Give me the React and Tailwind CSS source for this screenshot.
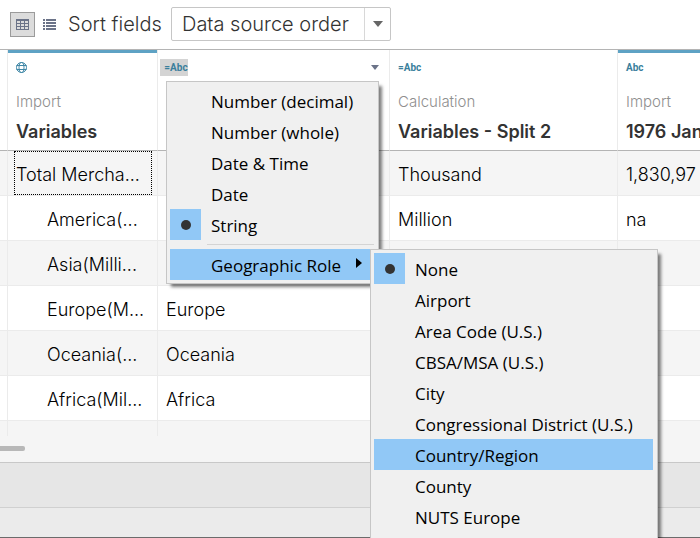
import React from "react";

const rows = [
  { name: "Total Mercha...", region: "", unit: "Thousand", value: "1,830,97", total: true },
  { name: "America(...", region: "", unit: "Million", value: "na" },
  { name: "Asia(Milli...", region: "", unit: "", value: "" },
  { name: "Europe(M...", region: "Europe", unit: "", value: "" },
  { name: "Oceania(...", region: "Oceania", unit: "", value: "" },
  { name: "Africa(Mil...", region: "Africa", unit: "", value: "" },
];

const typeItems = [
  { label: "Number (decimal)" },
  { label: "Number (whole)" },
  { label: "Date & Time" },
  { label: "Date" },
  { label: "String", checked: true },
];

const roleItems = [
  { label: "None", checked: true },
  { label: "Airport" },
  { label: "Area Code (U.S.)" },
  { label: "CBSA/MSA (U.S.)" },
  { label: "City" },
  { label: "Congressional District (U.S.)" },
  { label: "Country/Region", active: true },
  { label: "County" },
  { label: "NUTS Europe" },
];

function GridIcon() {
  return (
    <svg width="13" height="11" viewBox="0 0 13 11" fill="#6b7388" shapeRendering="crispEdges" aria-hidden="true">
      <path fillRule="evenodd" d="M0 0h13v11H0zM1 2v2h3V2zM5 2v2h3V2zM9 2v2h3V2zM1 5v2h3V5zM5 5v2h3V5zM9 5v2h3V5zM1 8v2h3V8zM5 8v2h3V8zM9 8v2h3V8z" />
    </svg>
  );
}

function ListIcon() {
  return (
    <svg width="13" height="11" viewBox="0 0 13 11" fill="#6b7388" shapeRendering="crispEdges" aria-hidden="true">
      <path d="M0 0h2v2H0zM3 0h10v2H3zM0 3h2v2H0zM3 3h10v2H3zM0 6h2v2H0zM3 6h10v2H3zM0 9h2v2H0zM3 9h10v2H3z" />
    </svg>
  );
}

function GlobeIcon() {
  return (
    <svg width="11" height="11" viewBox="0 0 11 11" fill="none" stroke="#3f87a6" aria-hidden="true">
      <circle cx="5.5" cy="5.5" r="5" />
      <ellipse cx="5.5" cy="5.5" rx="2.5" ry="5" />
      <path d="M0.5 3.5h10M0.5 7.5h10" />
    </svg>
  );
}

function MenuItem({ label, checked, active, children }) {
  return (
    <li role="none" className="relative">
      <button
        type="button"
        role="menuitem"
        className={`flex h-[31px] w-full items-center text-left whitespace-nowrap ${active ? "bg-[#91c8f6]" : ""}`}
      >
        <span className={`mr-[10px] flex size-[31px] shrink-0 items-center justify-center ${checked ? "bg-[#91c8f6]" : ""}`}>
          {checked && <span className="size-[10px] rounded-full bg-[#333]" />}
        </span>
        <span className="pt-0.5">{label}</span>
        {children && (
          <svg width="6" height="10" viewBox="0 0 6 10" className="mr-[12px] mb-1 ml-auto" aria-hidden="true">
            <path d="M0 0l6 5-6 5z" fill="#000" />
          </svg>
        )}
      </button>
      {children}
    </li>
  );
}

const menuBox =
  "absolute border border-[#c6c6c6] bg-[#f0f0f0] py-[3px] pl-[3px] pr-1 font-['Open_Sans','Noto_Sans',sans-serif] text-[17px] font-normal text-black shadow-[4px_4px_3px_-1px_rgba(0,0,0,0.5)]";

function RoleMenu() {
  return (
    <ul role="menu" aria-label="Geographic Role" className={`${menuBox} top-0 left-[200px] w-[288px] pb-8`}>
      {roleItems.map((item) => (
        <MenuItem key={item.label} {...item} />
      ))}
    </ul>
  );
}

function TypeMenu() {
  return (
    <ul role="menu" aria-label="Data type" className={`${menuBox} top-[31px] left-2 z-10 w-[213px]`}>
      {typeItems.map((item) => (
        <MenuItem key={item.label} {...item} />
      ))}
      <li role="separator" className="ml-[37px] h-[9px] py-1">
        <div className="h-px bg-[#d4d4d4]" />
      </li>
      <MenuItem label="Geographic Role" active>
        <RoleMenu />
      </MenuItem>
    </ul>
  );
}

function Header({ imported, icon, source, title, children }) {
  return (
    <th scope="col" className="relative h-[101px] border-r border-b border-r-[#ebebeb] border-b-[#b4b4b4] p-0 text-left align-top font-normal last:border-r-0">
      <div className={`h-[3px] ${imported ? "bg-[#5ea2c4]" : ""}`} />
      <div className="flex h-[29px] items-center pl-2 font-['Roboto',sans-serif] text-[10px] font-bold text-[#3a7f9c]">{icon}</div>
      <div className="mt-2 pl-2 text-[15px] leading-6 font-light text-[#8f8f8f]">{source}</div>
      <div className="mt-1 pl-2 text-[18px] leading-7 font-semibold whitespace-nowrap text-[#333]">{title}</div>
      {children}
    </th>
  );
}

const cell = "overflow-hidden border-r border-b border-[#ebebeb] p-0 pt-0.5 pl-2 whitespace-nowrap last:border-r-0";

export default function App() {
  return (
    <div className="flex h-screen flex-col overflow-hidden bg-white font-['Inter',sans-serif] text-[#333]">
      <header className="flex h-[50px] shrink-0 items-center border-b border-[#b4b4b4] pb-px pl-[10px]">
        <button type="button" aria-label="Grid view" className="flex size-[25px] items-center justify-center border border-[#9b9b9b] bg-[#dcdcdc]">
          <GridIcon />
        </button>
        <button type="button" aria-label="List view" className="ml-2 flex">
          <ListIcon />
        </button>
        <label htmlFor="sort" className="ml-3 w-[103px] text-xl font-light whitespace-nowrap">
          Sort fields
        </label>
        <div className="relative h-[34px] w-[220px]">
          <select id="sort" className="h-full w-full appearance-none rounded-xs border border-[#c6c6c6] bg-white pl-[10px] text-xl font-light">
            <option>Data source order</option>
          </select>
          <div className="pointer-events-none absolute inset-y-px right-px flex w-[26px] items-center justify-center border-l border-[#d8d8d8]">
            <svg width="10" height="6" viewBox="0 0 10 6" aria-hidden="true">
              <path d="M0 0h10L5 6z" fill="#666" />
            </svg>
          </div>
        </div>
      </header>

      <main className="shrink-0">
        <table className="w-full table-fixed border-separate border-spacing-0 text-[18px]">
          <colgroup>
            <col className="w-2" />
            <col className="w-[150px]" />
            <col className="w-[232px]" />
            <col className="w-[228px]" />
            <col />
          </colgroup>
          <thead>
            <tr>
              <td className="border-r border-b border-r-[#ebebeb] border-b-[#b4b4b4] p-0" />
              <Header imported icon={<GlobeIcon />} source="Import" title="Variables" />
              <Header
                icon={
                  <div className="-ml-[6px] flex w-full items-center justify-between">
                    <button type="button" className="h-[17px] w-7 bg-[#d4d4d4] pl-1">=Abc</button>
                    <svg width="8" height="5" viewBox="0 0 8 5" className="mr-1" aria-hidden="true">
                      <path d="M0 0h8L4 5z" fill="#6b7388" />
                    </svg>
                  </div>
                }
                source=""
                title=""
              >
                <TypeMenu />
              </Header>
              <Header icon="=Abc" source="Calculation" title="Variables - Split 2" />
              <Header imported icon="Abc" source="Import" title="1976 Jan" />
            </tr>
          </thead>
          <tbody className="font-light text-black">
            {rows.map((row) => (
              <tr key={row.name} className="h-[45px] odd:bg-[#f5f5f5]">
                <td className="border-r border-b border-[#ebebeb] p-0" />
                {row.total ? (
                  <td className="border-r border-b border-[#ebebeb] p-0 whitespace-nowrap">
                    <div className="mr-[5px] ml-[6px] flex h-[44px] items-center border border-dotted border-black pt-0.5 pl-px">{row.name}</div>
                  </td>
                ) : (
                  <td className="border-r border-b border-[#ebebeb] p-0 pt-0.5 pl-[39px] whitespace-nowrap">{row.name}</td>
                )}
                <td className={cell}>{row.region}</td>
                <td className={cell}>{row.unit}</td>
                <td className={cell}>{row.value}</td>
              </tr>
            ))}
            <tr className="h-[15px] bg-[#f5f5f5]">
              <td className="border-r border-[#ebebeb] p-0" />
              <td className="border-r border-[#ebebeb] p-0" />
              <td className="border-r border-[#ebebeb] p-0" />
              <td className="border-r border-[#ebebeb] p-0" />
              <td className="p-0" />
            </tr>
          </tbody>
        </table>
        <div className="h-[27px] border-b border-[#c8c8c8] bg-[#f5f5f5] pt-[10px]">
          <div className="h-[5px] w-[25px] rounded-r-xs bg-[#b8b8b8]" />
        </div>
      </main>
      <div className="h-[45px] shrink-0 border-b border-[#d0d0d0] bg-[#e6e6e6]" />
      <div className="grow border-b border-[#6b6b6b] bg-[#ebebeb]" />
    </div>
  );
}
